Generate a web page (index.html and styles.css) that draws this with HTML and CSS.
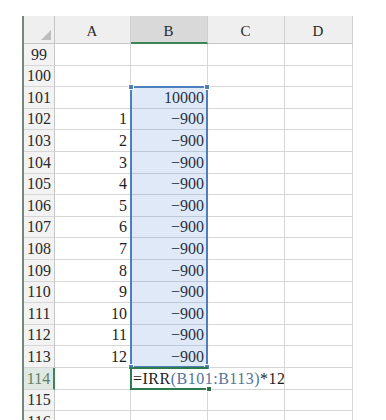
FILE: index.html
```html
<!DOCTYPE html>
<html>
<head>
    <title>IRR sheet</title>
    <link rel="stylesheet" href="styles.css">
</head>
<body>
    <div class="sheet">
        <div class="c rh corner"><span class="tri"></span></div>
        <div class="c ch">A</div>
        <div class="c ch on">B</div>
        <div class="c ch">C</div>
        <div class="c ch">D</div>

        <div class="c rh">99</div><div class="c"></div><div class="c"></div><div class="c"></div><div class="c"></div>
        <div class="c rh">100</div><div class="c"></div><div class="c"></div><div class="c"></div><div class="c"></div>
        <div class="c rh">101</div><div class="c"></div><div class="c">10000</div><div class="c"></div><div class="c"></div>
        <div class="c rh">102</div><div class="c">1</div><div class="c">−900</div><div class="c"></div><div class="c"></div>
        <div class="c rh">103</div><div class="c">2</div><div class="c">−900</div><div class="c"></div><div class="c"></div>
        <div class="c rh">104</div><div class="c">3</div><div class="c">−900</div><div class="c"></div><div class="c"></div>
        <div class="c rh">105</div><div class="c">4</div><div class="c">−900</div><div class="c"></div><div class="c"></div>
        <div class="c rh">106</div><div class="c">5</div><div class="c">−900</div><div class="c"></div><div class="c"></div>
        <div class="c rh">107</div><div class="c">6</div><div class="c">−900</div><div class="c"></div><div class="c"></div>
        <div class="c rh">108</div><div class="c">7</div><div class="c">−900</div><div class="c"></div><div class="c"></div>
        <div class="c rh">109</div><div class="c">8</div><div class="c">−900</div><div class="c"></div><div class="c"></div>
        <div class="c rh">110</div><div class="c">9</div><div class="c">−900</div><div class="c"></div><div class="c"></div>
        <div class="c rh">111</div><div class="c">10</div><div class="c">−900</div><div class="c"></div><div class="c"></div>
        <div class="c rh">112</div><div class="c">11</div><div class="c">−900</div><div class="c"></div><div class="c"></div>
        <div class="c rh">113</div><div class="c">12</div><div class="c">−900</div><div class="c"></div><div class="c"></div>
        <div class="c rh on">114</div><div class="c"></div>
        <div class="c edit"><span class="formula">=IRR<span class="ref">(B101:B113)</span>*12</span></div>
        <div class="c"></div><div class="c"></div>
        <div class="c rh">115</div><div class="c"></div><div class="c"></div><div class="c"></div><div class="c"></div>
        <div class="c rh">116</div><div class="c"></div><div class="c"></div><div class="c"></div><div class="c"></div>

        <!-- selection B101:B113 and active cell B114 -->
        <div class="sel"><i class="h tl"></i><i class="h tr"></i><i class="h bl"></i><i class="h br"></i></div>
        <div class="act"><i class="h br"></i></div>
    </div>
</body>
</html>
```

FILE: styles.css
```css
body { margin: 0; background: #fff; overflow: hidden; }
.sheet { position: relative; display: grid; grid-template-columns: 31px 76px 77px 77px 68px; grid-template-rows: 28px repeat(18, 21.6px); width: max-content; margin: 16px 0 0 22px; border-left: 2px solid #71887b; }
.c { box-sizing: border-box; display: flex; align-items: flex-end; justify-content: flex-end; padding: 0 3px 1px 2px; border-right: 1px solid #d6d6d6; border-bottom: 1px solid #d6d6d6; font: 16px/18px "Liberation Serif", serif; color: #1e1e1e; white-space: nowrap; }
.rh { justify-content: center; padding: 0 0 1px; background: #f3f3f3; border-right-color: #c6c6c6; border-bottom-color: #d6d6d6; color: #2a2a2a; }
.rh.on { background: #dfe8e2; color: #5f8069; border-right: 2px solid #3c8656; }
.ch { justify-content: center; padding-bottom: 3px; background: #efefef; border-right-color: #d0d0d0; border-bottom: 1px solid #c6c6c6; font-size: 15px; color: #2a2a2a; }
.ch.on { background: #d9d9d9; border-bottom: 2px solid #3c8656; padding-bottom: 2px; }
.corner { justify-content: flex-end; padding: 0 3px 3px 0; background: #efefef; border-bottom: 1px solid #c6c6c6; }
.tri { width: 0; height: 0; border-left: 10px solid transparent; border-bottom: 10px solid #bdbdbd; }
.edit { justify-content: flex-start; overflow: visible; }
.formula { background: #fff; padding-right: 2px; letter-spacing: 0.5px; color: #1e1e1e; }
.ref { color: #52739c; }
.sel { position: absolute; grid-column: 3 / 4; grid-row: 4 / 17; top: -1px; left: -1px; right: 0; bottom: 0; border: 2px solid #4d7fbf; background: rgba(70, 125, 205, 0.17); }
.act { position: absolute; grid-column: 3 / 4; grid-row: 17 / 18; top: -1px; left: -1px; right: 0; bottom: 0; border: 2px solid #2f7a4c; border-right: none; }
.h { position: absolute; width: 4px; height: 4px; background: #4d7fbf; border: 1px solid #fff; }
.act .h { background: #2f6e48; }
.tl { left: -4px; top: -4px; }
.tr { right: -4px; top: -4px; }
.bl { left: -4px; bottom: -4px; }
.br { right: -4px; bottom: -4px; }
```
